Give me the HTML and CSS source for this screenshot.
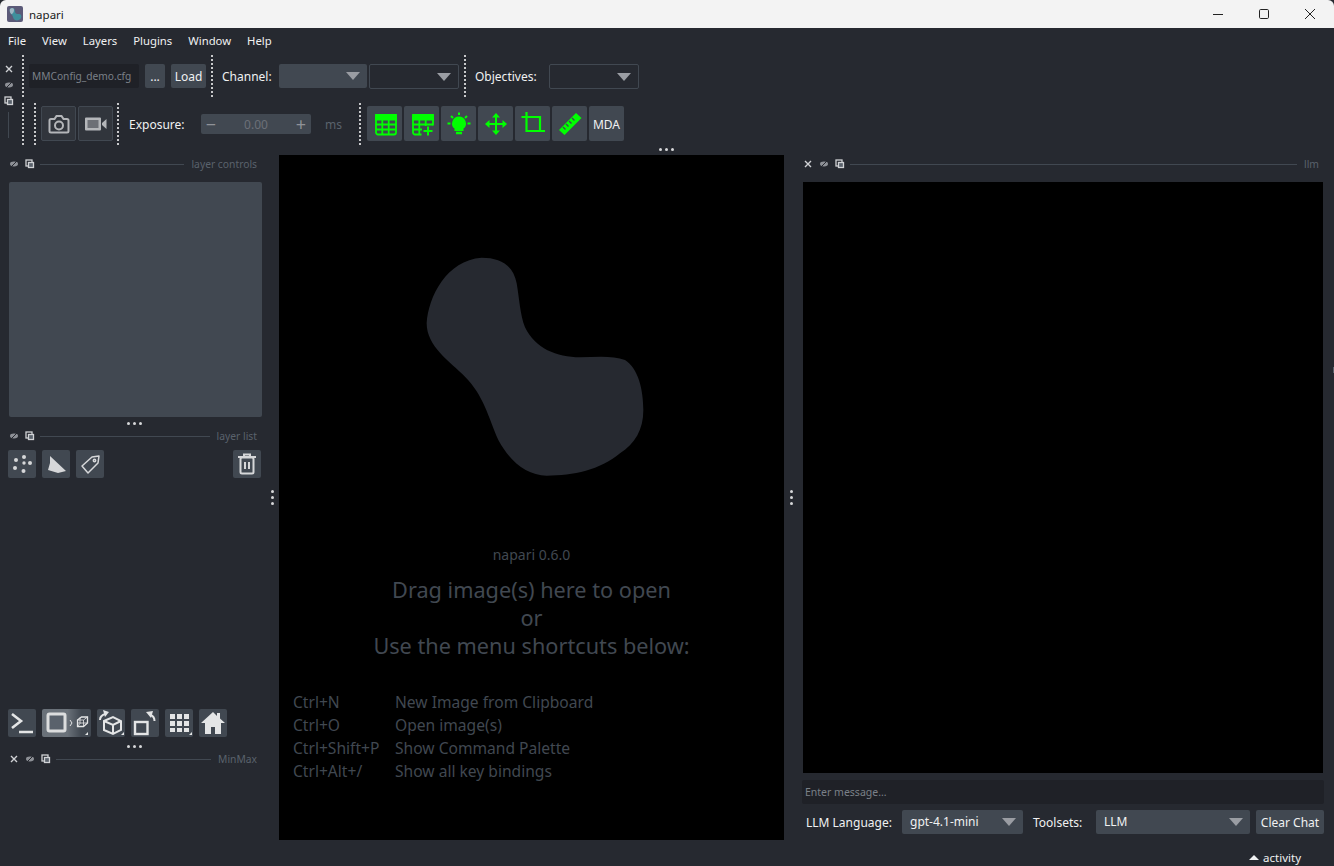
FILE: index.html
```html
<!DOCTYPE html>
<html lang="en">
  <head>
    <meta charset="UTF-8" />
    <title>napari</title>
    <link rel="stylesheet" href="styles.css">
  </head>
  <body>
    <div class="window">
      <header class="titlebar">
        <svg class="app-icon" viewBox="0 0 16 16">
          <rect width="16" height="16" rx="2" fill="#5b5a78"/>
          <path d="M3 3c2-2 5-1 5 2s2 3 4 3 3 2 2 4-4 3-6 2-2-4-3-5-3-4-2-6z" fill="#3f8f9c"/>
          <path d="M3 3c2-2 4-1 4 1s-1 3-2 4-3-3-2-5z" fill="#9fb7c4"/>
        </svg>
        <span class="app-name">napari</span>
        <div class="win-controls">
          <svg viewBox="0 0 12 12"><path d="M1 6.500h10" stroke="#222" fill="none"/></svg>
          <svg viewBox="0 0 12 12"><rect x="1.500" y="1.500" width="9" height="9" rx="1.200" stroke="#222" fill="none"/></svg>
          <svg viewBox="0 0 12 12"><path d="M1 1l10 10M11 1L1 11" stroke="#222" fill="none"/></svg>
        </div>
      </header>

      <nav class="menubar">
        <span>File</span><span>View</span><span>Layers</span><span>Plugins</span><span>Window</span><span>Help</span>
      </nav>

      <section class="toolbars">
        <div class="dock-icons">
          <svg class="mini" viewBox="0 0 10 10"><path d="M2 2l6 6M8 2L2 8" stroke="#d0d2d5" stroke-width="1.400" fill="none"/></svg>
          <svg class="mini" viewBox="0 0 10 10"><ellipse cx="5" cy="5" rx="4" ry="2.400" fill="#8d9096"/><path d="M2 8l6-6" stroke="#262930"/></svg>
          <svg class="mini" viewBox="0 0 10 10"><rect x="1" y="1" width="6" height="6" fill="none" stroke="#d0d2d5" stroke-width="1.300"/><rect x="3.500" y="3.500" width="5" height="5" fill="#5a626c" stroke="#d0d2d5" stroke-width="1.300"/></svg>
          <div class="dock-line"></div>
        </div>
        <div class="toolbar-rows">
          <div class="toolrow first">
            <div class="grip"></div>
            <div class="cfg-path">MMConfig_demo.cfg</div>
            <button class="btn dots-btn">...</button>
            <button class="btn load-btn">Load</button>
            <div class="grip grip-load"></div>
            <label class="tool-label channel-label">Channel:</label>
            <div class="combo channel-a filled"></div>
            <div class="combo channel-b"></div>
            <div class="grip grip-channel"></div>
            <label class="tool-label objectives-label">Objectives:</label>
            <div class="combo objectives"></div>
          </div>
          <div class="toolrow second">
            <div class="grip"></div>
            <div class="grip grip-second"></div>
            <button class="tool-btn outlined cam-first">
              <svg viewBox="0 0 24 24" fill="none" stroke="#b4b6b9" stroke-width="2"><path d="M2.500 8.500a1.500 1.500 0 0 1 1.500-1.500h3.500l2-3h5l2 3H20a1.500 1.500 0 0 1 1.500 1.500V19a1.500 1.500 0 0 1-1.500 1.500H4A1.500 1.500 0 0 1 2.500 19z"/><circle cx="12" cy="13.500" r="4"/></svg>
            </button>
            <button class="tool-btn outlined">
              <svg viewBox="0 0 24 24"><path d="M2 5.500h14a1 1 0 0 1 1 1v11a1 1 0 0 1-1 1H2a1 1 0 0 1-1-1v-11a1 1 0 0 1 1-1z" fill="#b4b6b9"/><path d="M3.500 8h11v8h-11z" fill="#6d7076"/><path d="M18 11l4.500-4v10L18 13z" fill="#b4b6b9"/></svg>
            </button>
            <div class="grip grip-cam"></div>
            <label class="tool-label exposure-label">Exposure:</label>
            <div class="spin"><span class="spin-sign">&minus;</span><span class="spin-value">0.00</span><span class="spin-sign">+</span></div>
            <span class="unit">ms</span>
            <div class="grip grip-unit"></div>
            <button class="tool-btn plain">
              <svg viewBox="0 0 24 24" fill="none" stroke="#0f0" stroke-width="1.800"><rect x="3" y="3" width="20" height="19.500" rx="2"/><path d="M3 12.500h20M3 17.500h20M9.300 7v15M15.700 7v15"/><path d="M3 3h20v4.500H3z" fill="#0f0"/></svg>
            </button>
            <button class="tool-btn plain">
              <svg viewBox="0 0 24 24" fill="none" stroke="#0f0" stroke-width="1.800"><path d="M11.500 22.500H5a2 2 0 0 1-2-2V5a2 2 0 0 1 2-2h16a2 2 0 0 1 2 2v8.500"/><path d="M3 12.500h20M3 17.500h9M9.300 7v15M15.700 7v7"/><path d="M3 3h20v4.500H3z" fill="#0f0"/><path d="M18 14.500v9M13.500 19h9" stroke-width="2"/></svg>
            </button>
            <button class="tool-btn plain">
              <svg viewBox="0 0 24 24" fill="none" stroke="#0f0" stroke-width="2"><path d="M12 5.500a6 6 0 0 0-3.500 10.800V18h7v-1.700A6 6 0 0 0 12 5.500z" fill="#0f0"/><path d="M9 21h6" stroke-width="2.500"/><path d="M12 0.500v2.500M4 4l2 2M20 4l-2 2M0.500 11.500h3M20.500 11.500h3"/></svg>
            </button>
            <button class="tool-btn plain">
              <svg viewBox="0 0 24 24" fill="#0f0"><path d="M12 1l4 4.500h-3v5.500h5.500V8l4.500 4-4.500 4v-3H13v5.500h3L12 23l-4-4.500h3V13H5.500v3L1 12l4.500-4v3H11V5.500H8z"/></svg>
            </button>
            <button class="tool-btn plain">
              <svg viewBox="0 0 24 24" fill="none" stroke="#0f0" stroke-width="2.200"><path d="M0.500 5h18.500v14.500M5.500 0V19h18.500"/></svg>
            </button>
            <button class="tool-btn plain">
              <svg viewBox="0 0 24 24" fill="#0f0"><path d="M1 18L18 1l5.500 5L6.500 23z"/><path d="M14 6l2.500 2.500M11 9l2.500 2.500M8 12l2.500 2.500M5 15l2.500 2.500" stroke="#414851" stroke-width="1.400"/></svg>
            </button>
            <button class="tool-btn plain mda">MDA</button>
          </div>
        </div>
      </section>
      <div class="h-handle top-handle"><span></span><span></span><span></span></div>

      <main class="main">
        <aside class="left-col">
          <div class="dock-title controls-title">
            <svg class="mini" viewBox="0 0 10 10"><ellipse cx="5" cy="5" rx="4" ry="2.400" fill="#8d9096"/><path d="M2 8l6-6" stroke="#262930"/></svg>
            <svg class="mini" viewBox="0 0 10 10"><rect x="1" y="1" width="6" height="6" fill="none" stroke="#d0d2d5" stroke-width="1.300"/><rect x="3.500" y="3.500" width="5" height="5" fill="#5a626c" stroke="#d0d2d5" stroke-width="1.300"/></svg>
            <div class="dock-rule"></div>
            <span>layer controls</span>
          </div>
          <div class="controls-panel"></div>
          <div class="h-handle"><span></span><span></span><span></span></div>
          <div class="dock-title list-title">
            <svg class="mini" viewBox="0 0 10 10"><ellipse cx="5" cy="5" rx="4" ry="2.400" fill="#8d9096"/><path d="M2 8l6-6" stroke="#262930"/></svg>
            <svg class="mini" viewBox="0 0 10 10"><rect x="1" y="1" width="6" height="6" fill="none" stroke="#d0d2d5" stroke-width="1.300"/><rect x="3.500" y="3.500" width="5" height="5" fill="#5a626c" stroke="#d0d2d5" stroke-width="1.300"/></svg>
            <div class="dock-rule"></div>
            <span>layer list</span>
          </div>
          <div class="layer-buttons">
            <button class="square">
              <svg viewBox="0 0 28 28" fill="#d6d7d9"><circle cx="8" cy="10" r="2"/><circle cx="16" cy="7" r="2"/><circle cx="16" cy="13" r="1.700"/><circle cx="22" cy="13" r="2"/><circle cx="7" cy="18" r="2"/><circle cx="15.500" cy="21" r="2"/></svg>
            </button>
            <button class="square">
              <svg viewBox="0 0 28 28"><path d="M8 6l16 15-8 2-10-3 2-7z" fill="#d6d7d9"/></svg>
            </button>
            <button class="square">
              <svg viewBox="0 0 28 28" fill="none" stroke="#d6d7d9" stroke-width="1.500"><path d="M6 16L16 7l7-1-1 7-10 10z" stroke-linejoin="round"/><circle cx="18.500" cy="10.500" r="1.200"/></svg>
            </button>
            <button class="square trash">
              <svg viewBox="0 0 28 28" fill="none" stroke="#d6d7d9" stroke-width="2"><path d="M5 7h18M11 7V4.500h6V7"/><rect x="7.500" y="7.500" width="13" height="16" rx="1.500"/><path d="M12 12v7M16 12v7"/></svg>
            </button>
          </div>
          <div class="left-spacer"></div>
          <div class="viewer-buttons">
            <button class="square">
              <svg viewBox="0 0 28 28" fill="none" stroke="#e4e5e6" stroke-width="2.600"><path d="M4 5l9 7-9 7M11 23h14"/></svg>
            </button>
            <button class="square wide">
              <svg viewBox="0 0 49 28" fill="none"><rect x="6" y="5" width="17" height="17" rx="1.500" fill="#5a626c" stroke="#dcddde" stroke-width="3"/><path d="M28 11l2 3-2 3" stroke="#e4e5e6"/><path d="M35.500 11l4-3h6v6l-4 3.500h-6z" stroke="#e4e5e6" stroke-width="1.300"/><path d="M35.500 11h6v6.500M41.500 11l4-3M38 8.500v6l-2.500 3M35.500 14h10" stroke="#e4e5e6" stroke-width=".8"/><path d="M43 26h3v-3z" fill="#e4e5e6"/></svg>
            </button>
            <button class="square">
              <svg viewBox="0 0 28 28" fill="none" stroke="#e4e5e6" stroke-width="2"><path d="M7 12l9-4 8 4v9l-8 4-9-4z"/><path d="M7 12l9 4 8-4M16 16v9"/><path d="M3 11c0-3 2-5 5-6" /><path d="M6 1l6 2-4 5z" fill="#e4e5e6" stroke="none"/><path d="M24 26h3v-3z" fill="#e4e5e6" stroke="none"/></svg>
            </button>
            <button class="square">
              <svg viewBox="0 0 28 28" fill="none" stroke="#e4e5e6" stroke-width="2.400"><rect x="4" y="13" width="12.500" height="12"/><path d="M23.500 12c0-3-1-5-4-6" stroke-width="2"/><path d="M15 3l7-1-2 7z" fill="#e4e5e6" stroke="none"/></svg>
            </button>
            <button class="square">
              <svg viewBox="0 0 28 28" fill="#e4e5e6"><rect x="5" y="5" width="5" height="5"/><rect x="12" y="5" width="5" height="5"/><rect x="19" y="5" width="5" height="5"/><rect x="5" y="12" width="5" height="5"/><rect x="12" y="12" width="5" height="5"/><rect x="19" y="12" width="5" height="5"/><rect x="5" y="19" width="5" height="4"/><rect x="12" y="19" width="5" height="4"/><rect x="19" y="19" width="5" height="4"/><path d="M24 26h3v-3z"/></svg>
            </button>
            <button class="square">
              <svg viewBox="0 0 28 28" fill="#e4e5e6"><path d="M14 3L2 14h4v11h6v-7h4v7h6V14h4l-5-4.500V4h-3v3z"/></svg>
            </button>
          </div>
          <div class="h-handle viewer-handle"><span></span><span></span><span></span></div>
          <div class="dock-title minmax-title">
            <svg class="mini" viewBox="0 0 10 10"><path d="M2 2l6 6M8 2L2 8" stroke="#d0d2d5" stroke-width="1.400" fill="none"/></svg>
            <svg class="mini" viewBox="0 0 10 10"><ellipse cx="5" cy="5" rx="4" ry="2.400" fill="#8d9096"/><path d="M2 8l6-6" stroke="#262930"/></svg>
            <svg class="mini" viewBox="0 0 10 10"><rect x="1" y="1" width="6" height="6" fill="none" stroke="#d0d2d5" stroke-width="1.300"/><rect x="3.500" y="3.500" width="5" height="5" fill="#5a626c" stroke="#d0d2d5" stroke-width="1.300"/></svg>
            <div class="dock-rule"></div>
            <span>MinMax</span>
          </div>
        </aside>

        <div class="v-handle left-handle"><span></span><span></span><span></span></div>

        <section class="canvas">
          <svg class="blob" viewBox="0 0 780 750">
            <path d="M245 53C300 53 340 75 350 130C358 175 360 225 375 262C405 325 470 352 540 352C590 350 640 346 675 360C715 385 730 450 730 510C730 570 705 610 660 640C600 690 520 707 440 707C380 705 330 665 295 600C265 530 250 465 195 410C150 365 80 320 80 250C85 170 140 60 245 53Z" fill="#262930"/>
          </svg>
          <div class="version">napari 0.6.0</div>
          <div class="drag-text">Drag image(s) here to open<br>or<br>Use the menu shortcuts below:</div>
          <div class="shortcuts">
            <span>Ctrl+N</span><span>New Image from Clipboard</span>
            <span>Ctrl+O</span><span>Open image(s)</span>
            <span>Ctrl+Shift+P</span><span>Show Command Palette</span>
            <span>Ctrl+Alt+/</span><span>Show all key bindings</span>
          </div>
        </section>

        <div class="v-handle right-handle"><span></span><span></span><span></span></div>

        <aside class="right-col">
          <div class="dock-title llm-title">
            <svg class="mini" viewBox="0 0 10 10"><path d="M2 2l6 6M8 2L2 8" stroke="#d0d2d5" stroke-width="1.400" fill="none"/></svg>
            <svg class="mini" viewBox="0 0 10 10"><ellipse cx="5" cy="5" rx="4" ry="2.400" fill="#8d9096"/><path d="M2 8l6-6" stroke="#262930"/></svg>
            <svg class="mini" viewBox="0 0 10 10"><rect x="1" y="1" width="6" height="6" fill="none" stroke="#d0d2d5" stroke-width="1.300"/><rect x="3.500" y="3.500" width="5" height="5" fill="#5a626c" stroke="#d0d2d5" stroke-width="1.300"/></svg>
            <div class="dock-rule"></div>
            <span>llm</span>
          </div>
          <div class="chat-output"></div>
          <div class="chat-input">Enter message...</div>
          <div class="chat-controls">
            <label class="tool-label llm-label">LLM Language:</label>
            <div class="combo filled model-combo">gpt-4.1-mini</div>
            <label class="tool-label toolset-label">Toolsets:</label>
            <div class="combo filled toolset-combo">LLM</div>
            <button class="btn clear-btn">Clear Chat</button>
          </div>
        </aside>
      </main>

      <footer class="statusbar"><span class="up-arrow"></span><span>activity</span></footer>
      <div class="edge-mark"></div>
    </div>
  </body>
</html>
```

FILE: styles.css
```css
* {
  box-sizing: border-box;
}

html,
body {
  margin: 0;
  height: 100%;
  overflow: hidden;
}

body {
  background-color: #262930;
  color: #f0f1f2;
  font-family: "Noto Sans", "Open Sans", sans-serif;
  font-size: 12px;
}

button {
  font: inherit;
  border: 0;
  padding: 0;
  color: inherit;
}

svg {
  display: block;
}

.window {
  position: relative;
  display: flex;
  flex-direction: column;
  height: 866px;
}

/* title bar */
.titlebar {
  height: 28px;
  flex: none;
  display: flex;
  align-items: center;
  padding-left: 7px;
  background-color: #f3f3f3;
  color: #1a1a1a;
  border-radius: 6px 6px 0 0;
}

.app-icon {
  width: 16px;
  height: 16px;
}

.app-name {
  margin-left: 6px;
  font-size: 11.5px;
}

.win-controls {
  margin-left: auto;
  display: flex;
  gap: 34px;
  padding-right: 18px;
}

.win-controls svg {
  width: 12px;
  height: 12px;
}

.menubar {
  height: 25px;
  flex: none;
  display: flex;
  align-items: center;
  gap: 16px;
  padding-left: 8px;
  font-size: 11.3px;
}

/* toolbars */
.toolbars {
  display: flex;
  flex: none;
  height: 94px;
}

.dock-icons {
  width: 22px;
  flex: none;
  padding: 11px 0 0 4px;
  display: flex;
  flex-direction: column;
  gap: 6px;
}

.mini {
  width: 10px;
  height: 10px;
  flex: none;
}

.dock-line {
  width: 1px;
  height: 26px;
  margin-left: 4px;
  background-color: #414851;
}

.toolrow {
  display: flex;
  align-items: center;
}

.toolrow.first {
  height: 46px;
}

.toolrow.second {
  height: 47px;
  margin-top: 1px;
}

.grip {
  width: 2px;
  height: 42px;
  flex: none;
  background: repeating-linear-gradient(#c8c9cb 0 2px, transparent 2px 4px);
}

.cfg-path {
  width: 110px;
  height: 24px;
  margin-left: 5px;
  padding-left: 3px;
  line-height: 24px;
  border-radius: 2px;
  background-color: #1f2127;
  color: #7b8088;
  font-size: 10.2px;
}

.btn {
  height: 24px;
  margin-left: 6px;
  border-radius: 2px;
  background-color: #414851;
}

.dots-btn {
  width: 20px;
}

.load-btn {
  width: 35px;
}

.grip-load {
  margin-left: 5px;
}

.tool-label {
  flex: none;
  white-space: nowrap;
}

.channel-label {
  margin-left: 9px;
  width: 50px;
}

.combo {
  position: relative;
  height: 25px;
  border: 1px solid #414851;
  border-radius: 2px;
  line-height: 24px;
  flex: none;
}

.combo::after {
  content: "";
  position: absolute;
  top: 8px;
  right: 7px;
  border-left: 7px solid transparent;
  border-right: 7px solid transparent;
  border-top: 8px solid #9a9da3;
}

.combo.filled {
  background-color: #414851;
  border: 0;
  height: 24px;
  line-height: 24px;
}

.channel-a {
  width: 88px;
  margin-left: 7px;
}

.channel-b {
  width: 90px;
  margin-left: 2px;
}

.grip-channel {
  margin-left: 5px;
}

.objectives-label {
  margin-left: 9px;
  width: 63px;
}

.objectives {
  width: 90px;
  margin-left: 11px;
}

.grip-second {
  margin-left: 10px;
}

.tool-btn {
  width: 35px;
  height: 35px;
  flex: none;
  display: flex;
  align-items: center;
  justify-content: center;
  border-radius: 2px;
  background-color: #414851;
}

.tool-btn svg {
  width: 24px;
  height: 24px;
}

.tool-btn.outlined {
  background-color: #31353c;
  border: 1px solid #414851;
  margin-left: 2px;
}

.tool-btn.cam-first {
  margin-left: 5px;
}

.tool-btn.plain {
  margin-left: 2px;
}

.tool-btn.mda {
  padding-top: 1px;
}

.grip-cam {
  margin-left: 4px;
}

.exposure-label {
  margin: 2px 0 0 10px;
  width: 57px;
}

.spin {
  width: 110px;
  height: 20px;
  margin: 1px 0 0 15px;
  padding: 0 4px;
  display: flex;
  align-items: center;
  justify-content: space-between;
  border-radius: 2px;
  background-color: #414851;
  color: #6c7078;
}

.spin-sign {
  width: 12px;
  text-align: center;
  font-size: 18px;
  line-height: 20px;
  color: #8f9298;
}

.unit {
  margin: 2px 0 0 14px;
  width: 17px;
  color: #5a626c;
}

.grip-unit {
  margin-left: 17px;
}

.grip-unit + .tool-btn.plain {
  margin-left: 6px;
}

.h-handle {
  display: flex;
  justify-content: center;
  gap: 3px;
  height: 12px;
  padding-right: 2px;
  align-items: center;
  flex: none;
}

.h-handle span,
.v-handle span {
  width: 3px;
  height: 3px;
  border-radius: 50%;
  background-color: #d6d7d9;
}

.top-handle {
  height: 8px;
  padding-top: 1px;
  align-items: flex-start;
}

.viewer-handle {
  margin-top: 3px;
}

/* main row */
.main {
  display: flex;
  height: 685px;
  flex: none;
}

.left-col {
  width: 270px;
  flex: none;
  display: flex;
  flex-direction: column;
}

.dock-title {
  flex: none;
  display: flex;
  align-items: center;
  gap: 6px;
  padding: 0 13px 0 9px;
  color: #5a626c;
  font-size: 10.3px;
}

.dock-rule {
  flex: 1;
  height: 1px;
  margin: 0 1px 0 -1px;
  background-color: #414851;
}

.controls-title {
  height: 18px;
  margin-bottom: 9px;
}

.list-title {
  height: 14px;
  margin-bottom: 7px;
}

.minmax-title {
  height: 14px;
  margin-bottom: 74px;
}

.controls-panel {
  height: 235px;
  margin: 0 8px 0 9px;
  flex: none;
  background-color: #414851;
  border-radius: 2px;
}

.layer-buttons,
.viewer-buttons {
  display: flex;
  gap: 6px;
  padding-left: 8px;
  flex: none;
}

.layer-buttons {
  padding-right: 9px;
}

.square {
  width: 28px;
  height: 28px;
  flex: none;
  border-radius: 2px;
  background-color: #414851;
}

.square svg {
  width: 28px;
  height: 28px;
}

.square.wide {
  width: 49px;
  background: linear-gradient(to right, #6a7179 0 52%, #414851 80%);
}

.square.wide svg {
  width: 49px;
}

.trash {
  margin-left: auto;
}

.left-spacer {
  flex: 1;
}

.v-handle {
  display: flex;
  flex-direction: column;
  align-items: center;
  justify-content: center;
  gap: 3px;
  flex: none;
}

.left-handle {
  width: 9px;
  padding-right: 5px;
}

.right-handle {
  width: 19px;
  padding-right: 4px;
}

/* canvas */
.canvas {
  width: 505px;
  flex: none;
  display: flex;
  flex-direction: column;
  align-items: center;
  padding-top: 85px;
  background-color: #000;
  color: #414851;
}

.blob {
  width: 260px;
  height: 250px;
  flex: none;
  margin-right: 4px;
}

.version {
  margin-top: 55px;
  font-size: 14px;
  line-height: 20px;
}

.drag-text {
  margin-top: 11px;
  font-size: 21.7px;
  line-height: 28px;
  text-align: center;
}

.shortcuts {
  align-self: stretch;
  margin-top: 30px;
  padding-left: 14px;
  display: grid;
  grid-template-columns: 102px 1fr;
  grid-auto-rows: 23px;
  align-items: center;
  font-size: 15.6px;
}

/* right dock */
.right-col {
  width: 521px;
  flex: none;
  display: flex;
  flex-direction: column;
}

.llm-title {
  padding: 0 5px 0 0;
  height: 18px;
  margin-bottom: 9px;
}

.chat-output {
  flex: 1;
  margin-right: 1px;
  background-color: #000;
}

.chat-input {
  height: 24px;
  margin: 7px 0 0 -1px;
  padding-left: 3px;
  flex: none;
  line-height: 24px;
  font-size: 10.5px;
  background-color: #1f2127;
  color: #7b8088;
  border-radius: 2px;
}

.chat-controls {
  display: flex;
  align-items: center;
  height: 24px;
  margin: 6px 0;
  flex: none;
}

.llm-label {
  margin-left: 3px;
  width: 85px;
}

.combo.model-combo {
  width: 121px;
  margin-left: 11px;
  padding-left: 8px;
}

.toolset-label {
  margin-left: 10px;
  width: 52px;
}

.combo.toolset-combo {
  width: 154px;
  margin-left: 11px;
  padding-left: 8px;
}

.clear-btn {
  width: 68px;
  margin-left: 6px;
}

.statusbar {
  flex: 1;
  display: flex;
  align-items: center;
  justify-content: flex-end;
  gap: 4px;
  padding: 8px 33px 0 0;
  font-size: 11.5px;
}

.up-arrow {
  border-left: 5px solid transparent;
  border-right: 5px solid transparent;
  border-bottom: 5px solid #f0f1f2;
}

.edge-mark {
  position: absolute;
  top: 367px;
  right: 0;
  width: 1px;
  height: 6px;
  background-color: #5a626c;
}
```
